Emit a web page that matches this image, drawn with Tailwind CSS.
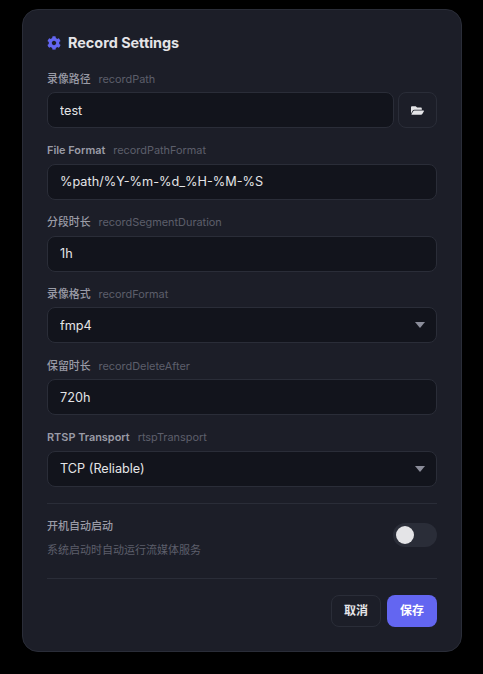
<!DOCTYPE html>
<html>

<head>
    <title>Record Settings</title>
    <script src="https://cdn.jsdelivr.net/npm/@tailwindcss/browser@4"></script>
</head>

<body class="bg-black font-['Inter','Noto_Sans_CJK_SC',sans-serif] text-[#e4e4e7]">
    <div class="ml-[22px] mt-[9px] w-[440px] h-[643px] bg-[#1c1e28] border border-[#2a2d38] rounded-[16px] p-6">
        <!-- Title -->
        <div class="flex items-center gap-[7px] h-[18px] mb-[18.5px]">
            <svg class="w-[14px] h-[14px] fill-[#6366f1]" viewBox="0 0 512 512"><path d="M487.4 315.7l-42.6-24.6c4.3-23.2 4.3-47 0-70.2l42.6-24.6c4.9-2.8 7.1-8.6 5.5-14-11.1-35.6-30-67.8-54.7-94.6-3.8-4.1-10-5.1-14.8-2.3L380.8 110c-17.9-15.4-38.5-27.3-60.8-35.1V25.8c0-5.6-3.9-10.5-9.4-11.7-36.7-8.2-74.3-7.8-109.2 0-5.5 1.2-9.4 6.1-9.4 11.7V75c-22.2 7.9-42.8 19.8-60.8 35.1L88.7 85.5c-4.9-2.8-11-1.9-14.8 2.3-24.7 26.7-43.6 58.9-54.7 94.6-1.7 5.4.6 11.2 5.5 14L67.3 221c-4.3 23.2-4.3 47 0 70.2l-42.6 24.6c-4.9 2.8-7.1 8.6-5.5 14 11.1 35.6 30 67.8 54.7 94.6 3.8 4.1 10 5.1 14.8 2.3l42.6-24.6c17.9 15.4 38.5 27.3 60.8 35.1v49.2c0 5.6 3.9 10.5 9.4 11.7 36.7 8.2 74.3 7.8 109.2 0 5.5-1.2 9.4-6.1 9.4-11.7v-49.2c22.2-7.9 42.8-19.8 60.8-35.1l42.6 24.6c4.9 2.8 11 1.9 14.8-2.3 24.7-26.7 43.6-58.9 54.7-94.6 1.5-5.5-.7-11.3-5.6-14.1zM256 336c-44.1 0-80-35.9-80-80s35.9-80 80-80 80 35.9 80 80-35.9 80-80 80z"/></svg>
            <h2 class="text-[14.4px] font-bold">Record Settings</h2>
        </div>

        <!-- Fields -->
        <div class="flex flex-col gap-[14.3px]">
            <div>
                <div class="flex items-center gap-2 h-4 mb-[5.5px] text-[10.9px] leading-4">
                    <span class="font-medium text-[#9a9ba6]">录像路径</span>
                    <span class="text-[#5c5e6b]">recordPath</span>
                </div>
                <div class="flex gap-1">
                    <input class="flex-1 min-w-0 h-9 px-3 bg-[#12141c] border border-[#2a2d38] rounded-lg text-[12.7px] outline-none" type="text" value="test">
                    <button class="w-[39px] h-9 flex items-center justify-center border border-[#2a2d38] rounded-lg">
                        <svg class="w-[13px] h-[13px] fill-[#e4e4e7]" viewBox="0 0 576 512"><path d="M572.694 292.093L500.27 416.248A63.997 63.997 0 0 1 444.989 448H45.025c-18.523 0-30.064-20.093-20.731-36.093l72.424-124.155A64 64 0 0 1 152 256h399.964c18.523 0 30.064 20.093 20.73 36.093zM152 224h328v-48c0-26.51-21.49-48-48-48H272l-64-64H48C21.49 64 0 85.49 0 112v278.046l69.077-118.418C86.214 242.25 117.989 224 152 224z"/></svg>
                    </button>
                </div>
            </div>

            <div>
                <div class="flex items-center gap-2 h-4 mb-[5.5px] text-[10.9px] leading-4">
                    <span class="font-semibold text-[#9a9ba6]">File Format</span>
                    <span class="text-[#5c5e6b]">recordPathFormat</span>
                </div>
                <input class="block w-full h-9 px-3 bg-[#12141c] border border-[#2a2d38] rounded-lg text-[12.7px] outline-none" type="text" value="%path/%Y-%m-%d_%H-%M-%S">
            </div>

            <div>
                <div class="flex items-center gap-2 h-4 mb-[5.5px] text-[10.9px] leading-4">
                    <span class="font-medium text-[#9a9ba6]">分段时长</span>
                    <span class="text-[#5c5e6b]">recordSegmentDuration</span>
                </div>
                <input class="block w-full h-9 px-3 bg-[#12141c] border border-[#2a2d38] rounded-lg text-[12.7px] outline-none" type="text" value="1h">
            </div>

            <div>
                <div class="flex items-center gap-2 h-4 mb-[5.5px] text-[10.9px] leading-4">
                    <span class="font-medium text-[#9a9ba6]">录像格式</span>
                    <span class="text-[#5c5e6b]">recordFormat</span>
                </div>
                <div class="relative">
                    <select class="block w-full h-9 px-3 appearance-none bg-[#12141c] border border-[#2a2d38] rounded-lg text-[12.7px] outline-none">
                        <option>fmp4</option>
                    </select>
                    <svg class="absolute right-[12px] top-[15px] w-[10px] h-[6px] fill-[#8b8d9a]" viewBox="0 0 10 6"><path d="M0 0h10L5 6z"/></svg>
                </div>
            </div>

            <div>
                <div class="flex items-center gap-2 h-4 mb-[5.5px] text-[10.9px] leading-4">
                    <span class="font-medium text-[#9a9ba6]">保留时长</span>
                    <span class="text-[#5c5e6b]">recordDeleteAfter</span>
                </div>
                <input class="block w-full h-9 px-3 bg-[#12141c] border border-[#2a2d38] rounded-lg text-[12.7px] outline-none" type="text" value="720h">
            </div>

            <div>
                <div class="flex items-center gap-2 h-4 mb-[5.5px] text-[10.9px] leading-4">
                    <span class="font-semibold text-[#9a9ba6]">RTSP Transport</span>
                    <span class="text-[#5c5e6b]">rtspTransport</span>
                </div>
                <div class="relative">
                    <select class="block w-full h-9 px-3 appearance-none bg-[#12141c] border border-[#2a2d38] rounded-lg text-[12.7px] outline-none">
                        <option>TCP (Reliable)</option>
                    </select>
                    <svg class="absolute right-[12px] top-[15px] w-[10px] h-[6px] fill-[#8b8d9a]" viewBox="0 0 10 6"><path d="M0 0h10L5 6z"/></svg>
                </div>
            </div>
        </div>

        <!-- Autostart -->
        <div class="mt-4 h-[76px] border-t border-b border-[#2a2d38] flex items-center justify-between">
            <div class="flex flex-col gap-2 -mt-[6px]">
                <div class="text-[11px] leading-4 font-medium text-[#9a9ba6]">开机自动启动</div>
                <div class="text-[11px] leading-4 text-[#5c5e6b]">系统启动时自动运行流媒体服务</div>
            </div>
            <div class="w-11 h-6 rounded-full bg-[#2a2d38] p-[3px] -mt-[12px]">
                <div class="w-[18px] h-[18px] rounded-full bg-[#e4e4e7]"></div>
            </div>
        </div>

        <!-- Actions -->
        <div class="flex justify-end gap-[6px] mt-4">
            <button class="w-[50px] h-8 border border-[#2a2d38] rounded-lg text-[12px] font-semibold">取消</button>
            <button class="w-[50px] h-8 bg-[#6366f1] rounded-lg text-[12px] font-semibold text-white">保存</button>
        </div>
    </div>
</body>

</html>
